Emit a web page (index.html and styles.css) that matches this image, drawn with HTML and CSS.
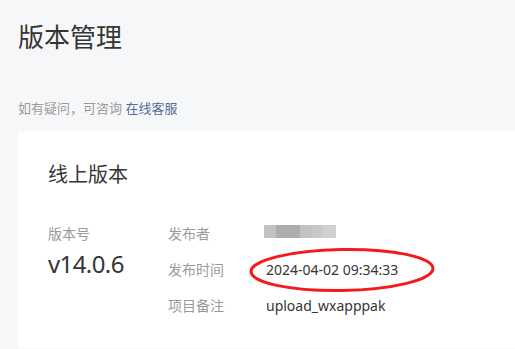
FILE: index.html
```html
<!DOCTYPE html>
<html lang="zh-CN">
<head>
  <meta charset="UTF-8">
  <meta name="viewport" content="width=device-width, initial-scale=1.0">
  <title>版本管理</title>
  <link rel="stylesheet" href="styles.css">
</head>
<body>
  <div class="page">
    <h1 class="page-title">版本管理</h1>
    <p class="tip">如有疑问，可咨询 <a href="#" class="tip-link">在线客服</a></p>

    <div class="card">
      <h2 class="card-title">线上版本</h2>
      <div class="info">
        <div class="version-col">
          <div class="label">版本号</div>
          <div class="version">v14.0.6</div>
        </div>
        <div class="detail">
          <div class="label">发布者</div>
          <div class="value">
            <div class="blur">
              <span class="b1"></span><span class="b2"></span><span class="b3"></span><span class="b4"></span><span class="b5"></span>
            </div>
          </div>
          <div class="label">发布时间</div>
          <div class="value mark">
            2024-04-02 09:34:33
            <svg class="circle" width="192" height="50" viewBox="0 0 192 50">
              <ellipse cx="95" cy="24" rx="91" ry="20.5" fill="none" stroke="#f5191b" stroke-width="3" transform="rotate(-1 95 24)"/>
            </svg>
          </div>
          <div class="label">项目备注</div>
          <div class="value">upload_wxapppak</div>
        </div>
      </div>
    </div>
  </div>
</body>
</html>
```

FILE: styles.css
```css
body {
  margin: 0;
  padding: 0;
  background-color: #f6f7f9;
  font-family: "Noto Sans", "Noto Sans CJK SC", sans-serif;
  color: #333;
  overflow: hidden;
}
.page {
  padding: 19px 0 0 18px;
}
.page-title {
  margin: 0;
  font-size: 26px;
  font-weight: normal;
  line-height: 36px;
  color: #353535;
}
.tip {
  margin: 43px 0 0;
  font-size: 13px;
  line-height: 20px;
  color: #9a9a9a;
}
.tip-link {
  color: #576b95;
  text-decoration: none;
}
.card {
  margin-top: 13px;
  height: 217px;
  box-sizing: border-box;
  padding: 30px 30px 0;
  background: #fff;
  border-radius: 4px 0 0 4px;
}
.card-title {
  margin: 0;
  font-size: 20px;
  font-weight: normal;
  line-height: 28px;
  color: #353535;
}
.info {
  display: flex;
  margin-top: 35px;
}
.version-col {
  width: 120px;
}
.label {
  font-size: 14px;
  line-height: 20px;
  color: #9a9a9a;
}
.version {
  margin-top: 4px;
  font-size: 24px;
  line-height: 32px;
  letter-spacing: -0.6px;
  color: #353535;
}
.detail {
  display: grid;
  grid-template-columns: 98px auto;
  row-gap: 16px;
}
.value {
  font-size: 14px;
  line-height: 20px;
  color: #353535;
}
.mark {
  position: relative;
}
.circle {
  position: absolute;
  left: -19px;
  top: -14px;
}
.blur {
  display: flex;
  width: 72px;
  height: 13px;
  margin: 1px 0 0 -2px;
}
.blur span {
  height: 100%;
}
.b1 { width: 12px; background: #c3c3c3; }
.b2 { width: 24px; background: #adadad; }
.b3 { width: 12px; background: #c3c3c3; }
.b4 { width: 10px; background: #c8c8c8; }
.b5 { width: 14px; background: #d0d0d0; }
```
